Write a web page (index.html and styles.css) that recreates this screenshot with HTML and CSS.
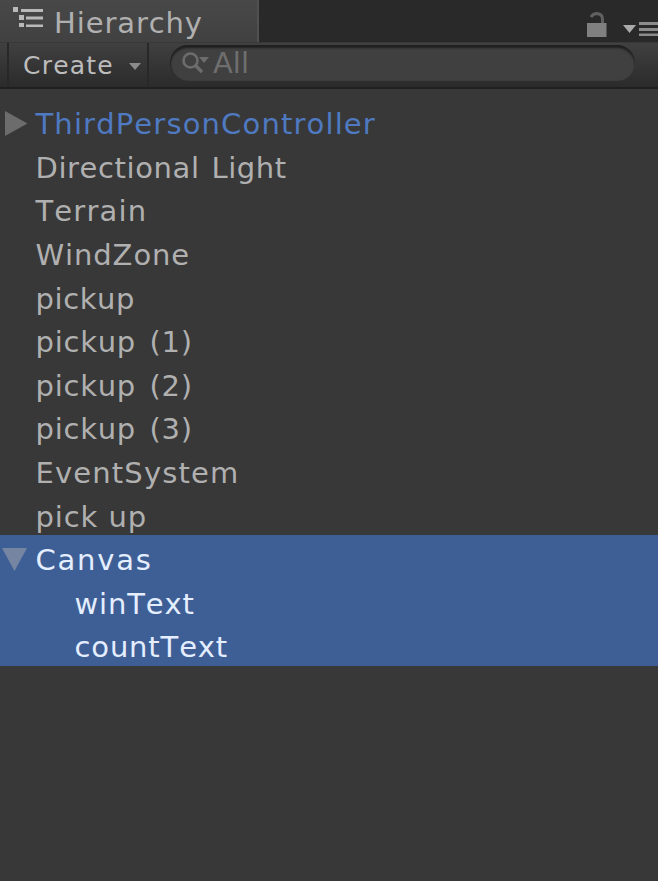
FILE: index.html
```html
<!DOCTYPE html>
<html lang="en">
<head>
<meta charset="utf-8">
<title>Hierarchy</title>
<link rel="stylesheet" href="styles.css">
</head>
<body>
<div class="panel">
  <header class="tabs">
    <div class="tab">
      <svg class="tab-icon" width="32" height="24" viewBox="0 0 32 24"><path d="M0 1h5v5H0zM6 9h5v5H6zM6 17h5v4H6zM8 3h22v3H8zM13 10.500h17v3H13zM13 18.500h17v2.500H13z" fill="#b9b9b9"/></svg>
      <span class="tab-title">Hierarchy</span>
    </div>
    <div class="actions">
      <svg width="20" height="26" viewBox="0 0 20 26"><path d="M4 5Q6 1.500 10 1.500Q15.500 2 15.500 7V12" fill="none" stroke="#606060" stroke-width="3"/><path d="M0 11h19.500v14H0z" fill="#808080"/></svg>
      <svg class="menu" width="35" height="16" viewBox="0 0 35 16"><path d="M0 4h13L6.500 12z" fill="#aaa"/><path d="M16 1h19v3H16zM16 7h19v3H16zM16 12.500h19v2.500H16z" fill="#8c8c8c"/></svg>
    </div>
  </header>
  <div class="toolbar">
    <div class="create"><span>Create</span><svg width="12" height="8" viewBox="0 0 12 8"><path d="M0 0h12L6 7z" fill="#8c8c8c"/></svg></div>
    <div class="search">
      <svg width="30" height="24" viewBox="0 0 30 24"><circle cx="9.500" cy="9.500" r="7" fill="none" stroke="#6c6c6c" stroke-width="2.600"/><path d="M14 14l7 7" stroke="#6c6c6c" stroke-width="3.500"/><path d="M18 6h10l-5 6z" fill="#6c6c6c"/></svg>
      <span>All</span>
    </div>
  </div>
  <ul class="tree">
    <li class="prefab"><svg class="arrow" width="24" height="26" viewBox="0 0 24 26"><path d="M0 0L22.500 12.500L0 25z" fill="#6c6c6c"/></svg><span>ThirdPersonController</span></li>
    <li class="tight"><span>Directional Light</span></li>
    <li><span>Terrain</span></li>
    <li class="medium"><span>WindZone</span></li>
    <li class="tight"><span>pickup</span></li>
    <li class="numbered"><span>pickup (1)</span></li>
    <li class="numbered"><span>pickup (2)</span></li>
    <li class="numbered"><span>pickup (3)</span></li>
    <li><span>EventSystem</span></li>
    <li class="medium"><span>pick up</span></li>
    <li class="selected wide"><svg class="arrow down" width="26" height="24" viewBox="0 0 26 24"><path d="M0 0h25L12.500 23z" fill="#7585a2"/></svg><span>Canvas</span></li>
    <li class="selected child"><span>winText</span></li>
    <li class="selected child"><span>countText</span></li>
  </ul>
</div>
</body>
</html>
```

FILE: styles.css
```css
* { box-sizing: border-box; }
body { margin: 0; background: #383838; font-family: "DejaVu Sans", sans-serif; font-size: 29px; font-kerning: none; color: #b0b0b0; }
.panel { width: 658px; height: 881px; overflow: hidden; background: #383838; }
.tabs { height: 42px; display: flex; justify-content: space-between; background: #292929; }
.tab { width: 259px; display: flex; align-items: flex-start; padding: 6px 0 0 13px; background: linear-gradient(#484848, #414141); border-right: 2px solid #505050; }
.tab-icon { margin-right: 9px; }
.tab-title { line-height: 35px; letter-spacing: .9px; }
.actions { display: flex; padding-top: 12px; }
.menu { margin: 9px 0 0 16px; }
.toolbar { height: 47px; display: flex; background: linear-gradient(#404040, #2b2b2b); border-bottom: 2px solid #202020; border-top: 1px solid #383838; }
.create { width: 142px; margin-left: 7px; padding-left: 14px; display: flex; align-items: center; border: solid #282828; border-width: 0 2px; font-size: 25px; color: #bdbdbd; letter-spacing: 1.200px; }
.create span { padding-top: 1px; }
.create svg { margin: 3px 0 0 15px; }
.search { width: 465px; height: 36px; margin: 2px 0 0 21px; padding-left: 11px; display: flex; align-items: center; border-radius: 18px; background: #404040; box-shadow: inset 0 3px 2px #202020, inset 1px 0 1px #2a2a2a; color: #6e6e6e; }
.search svg { margin-right: 2px; }
.search span { line-height: 34px; }
.tree { list-style: none; margin: 0; padding: 10px 0 0; }
.tree li { position: relative; height: 43.600px; padding: 4.200px 0 0 35.500px; line-height: 43.600px; letter-spacing: 1.150px; white-space: pre; }
.tree .tight { letter-spacing: .6px; word-spacing: 2px; }
.tree .medium { letter-spacing: .9px; }
.tree .numbered { letter-spacing: .75px; word-spacing: 3.500px; }
.tree .wide { letter-spacing: 1.800px; }
.tree .prefab { color: #4f7ac2; }
.tree .selected { background: #3e5f96; color: #e4eeff; }
.tree .child { padding-left: 74.500px; letter-spacing: .85px; }
.arrow { position: absolute; left: 5px; top: 12px; }
.arrow.down { left: 2px; top: 13px; }
```
